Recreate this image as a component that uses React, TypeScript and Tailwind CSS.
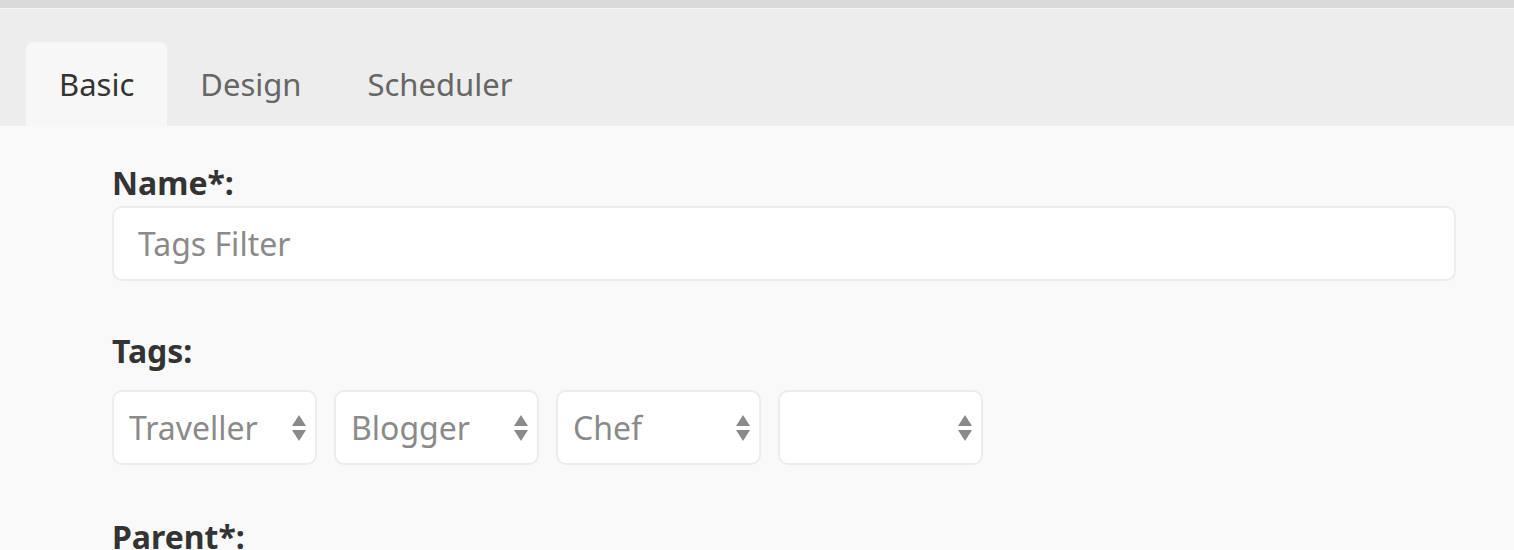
import React from 'react';

const font = { fontFamily: '"Noto Sans", "Open Sans", sans-serif' };

function Arrows() {
  return (
    <svg width="16" height="30" viewBox="0 0 16 30" className="shrink-0">
      <path d="M8 2 L15 13 L1 13 Z" fill="#8a8a8a" />
      <path d="M8 28 L15 17 L1 17 Z" fill="#8a8a8a" />
    </svg>
  );
}

function TagSelect({ value }: { value: string }) {
  return (
    <div className="w-[205px] h-[75px] bg-white border-2 border-[#ececec] rounded-[10px] flex items-center justify-between pl-[15px] pr-[8px]">
      <span className="text-[32px] text-[#8a8a8a]">{value}</span>
      <Arrows />
    </div>
  );
}

export default function App() {
  const tabs = ['Basic', 'Design', 'Scheduler'];
  return (
    <div className="w-[1514px] h-[550px] overflow-hidden bg-[#f9f9f9]" style={font}>
      <div className="h-[8px] bg-[#dadada]" />
      <div className="h-[1px] bg-[#f6f6f6]" />
      <div className="bg-[#ededed] pt-[33px] pl-[26px] flex items-end">
        {tabs.map((t, i) => (
          <div
            key={t}
            className={
              i === 0
                ? 'h-[84px] px-[33px] flex items-center rounded-t-[7px] bg-[#f7f7f7] text-[31px] text-[#333]'
                : 'h-[84px] px-[33px] flex items-center text-[31px] text-[#666]'
            }
          >
            {t}
          </div>
        ))}
      </div>
      <div className="pl-[112px] pr-[58px] pt-[33px]">
        <div className="text-[32px] font-bold text-[#333] leading-[47px]">Name*:</div>
        <div className="h-[75px] bg-white border-2 border-[#ececec] rounded-[10px] flex items-center px-[24px]">
          <span className="text-[32px] text-[#8a8a8a]">Tags Filter</span>
        </div>
        <div className="text-[32px] font-bold text-[#333] leading-[42px] mt-[49px] mb-[18px]">Tags:</div>
        <div className="flex gap-[17px]">
          <TagSelect value="Traveller" />
          <TagSelect value="Blogger" />
          <TagSelect value="Chef" />
          <TagSelect value="" />
        </div>
        <div className="text-[32px] font-bold text-[#333] leading-[42px] mt-[51px]">Parent*:</div>
      </div>
    </div>
  );
}
